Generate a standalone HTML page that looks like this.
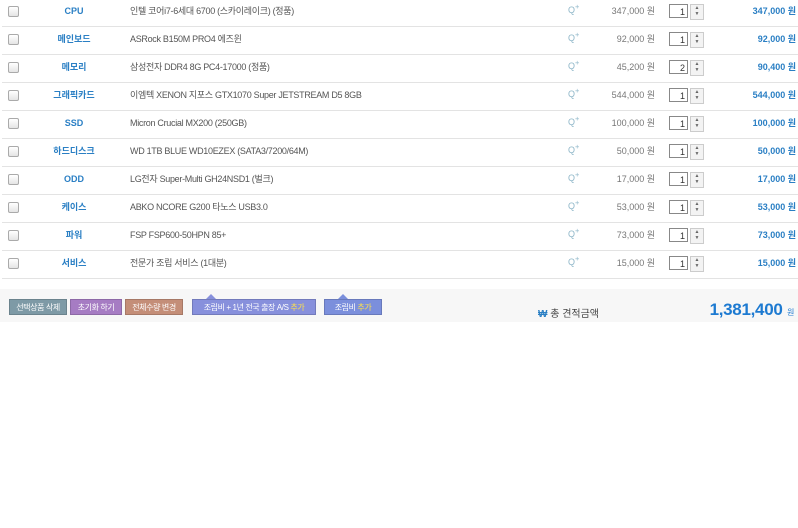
<!DOCTYPE html>
<html><head><meta charset="utf-8"><style>
body{margin:0;width:798px;height:528px;background:#fff;font-family:"Liberation Sans","Noto Sans CJK KR",sans-serif;font-size:9px;color:#555;position:relative;overflow:hidden}
.row{position:absolute;left:2px;width:796px;height:28px;border-bottom:1px solid #e3e3e3}
.row>*{position:absolute;top:0;line-height:26px;white-space:nowrap}
.cb{left:6px;top:8px!important;width:9px;height:9px;border:1px solid #aaa;border-radius:2px;background:linear-gradient(#fff,#e4e4e4)}
.cat{left:40px;width:64px;text-align:center;color:#2a7fc4;font-weight:bold;font-size:9px}
.nm{left:128px;color:#555;letter-spacing:-0.3px}
.q{left:566px;color:#8fb7c9;font-size:9px;top:-4px!important}
.pr{left:580px;width:73px;text-align:right;color:#777}
.qt{left:667px;top:6px!important;width:19px;height:14px;border:1px solid #888;line-height:14px!important;text-align:right;font-size:9px;color:#333;box-sizing:border-box;padding-right:2px}
.sp{left:688px;top:6px!important;width:12px;height:14px;border:1px solid #ccc;background:#f3f3f3;line-height:6px!important;font-size:5px;text-align:center;color:#666}
.tt{left:700px;width:94px;text-align:right;color:#2a7fc4;font-weight:bold}
.foot{position:absolute;left:0;top:289px;width:798px;height:33px;background:#f7f7f7}
.b{position:absolute;top:10px;height:16px;line-height:16px;color:#fff;font-size:8px;letter-spacing:-0.4px;white-space:nowrap;text-align:center;border:1px solid rgba(0,0,0,.15);box-sizing:border-box;overflow:hidden}
.y{color:#ffe24a}
</style></head><body>
<div class="row" style="top:-2px"><div class="cb"></div><div class="cat">CPU</div><div class="nm">인텔 코어i7-6세대 6700 (스카이레이크) (정품)</div><div class="q">Q<sup>+</sup></div><div class="pr">347,000 원</div><div class="qt">1</div><div class="sp">▲<br>▼</div><div class="tt">347,000 원</div></div>
<div class="row" style="top:26px"><div class="cb"></div><div class="cat">메인보드</div><div class="nm">ASRock B150M PRO4 에즈윈</div><div class="q">Q<sup>+</sup></div><div class="pr">92,000 원</div><div class="qt">1</div><div class="sp">▲<br>▼</div><div class="tt">92,000 원</div></div>
<div class="row" style="top:54px"><div class="cb"></div><div class="cat">메모리</div><div class="nm">삼성전자 DDR4 8G PC4-17000 (정품)</div><div class="q">Q<sup>+</sup></div><div class="pr">45,200 원</div><div class="qt">2</div><div class="sp">▲<br>▼</div><div class="tt">90,400 원</div></div>
<div class="row" style="top:82px"><div class="cb"></div><div class="cat">그래픽카드</div><div class="nm">이엠텍 XENON 지포스 GTX1070 Super JETSTREAM D5 8GB</div><div class="q">Q<sup>+</sup></div><div class="pr">544,000 원</div><div class="qt">1</div><div class="sp">▲<br>▼</div><div class="tt">544,000 원</div></div>
<div class="row" style="top:110px"><div class="cb"></div><div class="cat">SSD</div><div class="nm">Micron Crucial MX200 (250GB)</div><div class="q">Q<sup>+</sup></div><div class="pr">100,000 원</div><div class="qt">1</div><div class="sp">▲<br>▼</div><div class="tt">100,000 원</div></div>
<div class="row" style="top:138px"><div class="cb"></div><div class="cat">하드디스크</div><div class="nm">WD 1TB BLUE WD10EZEX (SATA3/7200/64M)</div><div class="q">Q<sup>+</sup></div><div class="pr">50,000 원</div><div class="qt">1</div><div class="sp">▲<br>▼</div><div class="tt">50,000 원</div></div>
<div class="row" style="top:166px"><div class="cb"></div><div class="cat">ODD</div><div class="nm">LG전자 Super-Multi GH24NSD1 (벌크)</div><div class="q">Q<sup>+</sup></div><div class="pr">17,000 원</div><div class="qt">1</div><div class="sp">▲<br>▼</div><div class="tt">17,000 원</div></div>
<div class="row" style="top:194px"><div class="cb"></div><div class="cat">케이스</div><div class="nm">ABKO NCORE G200 타노스 USB3.0</div><div class="q">Q<sup>+</sup></div><div class="pr">53,000 원</div><div class="qt">1</div><div class="sp">▲<br>▼</div><div class="tt">53,000 원</div></div>
<div class="row" style="top:222px"><div class="cb"></div><div class="cat">파워</div><div class="nm">FSP FSP600-50HPN 85+</div><div class="q">Q<sup>+</sup></div><div class="pr">73,000 원</div><div class="qt">1</div><div class="sp">▲<br>▼</div><div class="tt">73,000 원</div></div>
<div class="row" style="top:250px"><div class="cb"></div><div class="cat">서비스</div><div class="nm">전문가 조립 서비스 (1대분)</div><div class="q">Q<sup>+</sup></div><div class="pr">15,000 원</div><div class="qt">1</div><div class="sp">▲<br>▼</div><div class="tt">15,000 원</div></div>
<div class="foot">
<div class="b" style="left:9px;width:58px;background:#7e9aa6">선택상품 삭제</div>
<div class="b" style="left:70px;width:52px;background:#a67cc3">초기화 하기</div>
<div class="b" style="left:125px;width:58px;background:#c48e78">전체수량 변경</div>
<div class="b" style="left:192px;width:124px;background:#8790dc">조립비 + 1년 전국 출장 A/S <span class="y">추가</span></div>
<div style="position:absolute;left:206px;top:5px;width:0;height:0;border:5px solid transparent;border-bottom-color:#8790dc;border-top:0"></div>
<div class="b" style="left:324px;width:58px;background:#7b8fdc">조립비 <span class="y">추가</span></div>
<div style="position:absolute;left:338px;top:5px;width:0;height:0;border:5px solid transparent;border-bottom-color:#7b8fdc;border-top:0"></div>
<div style="position:absolute;left:538px;top:16px;font-size:10px;color:#444"><b style="color:#2a7fc4">₩</b> 총 견적금액</div>
<div style="position:absolute;left:680px;top:11px;width:114px;text-align:right;font-size:17px;font-weight:bold;color:#1d7ad1;white-space:nowrap;letter-spacing:-0.3px">1,381,400 <span style="font-size:8px;font-weight:normal">원</span></div>
</div>
</body></html>
